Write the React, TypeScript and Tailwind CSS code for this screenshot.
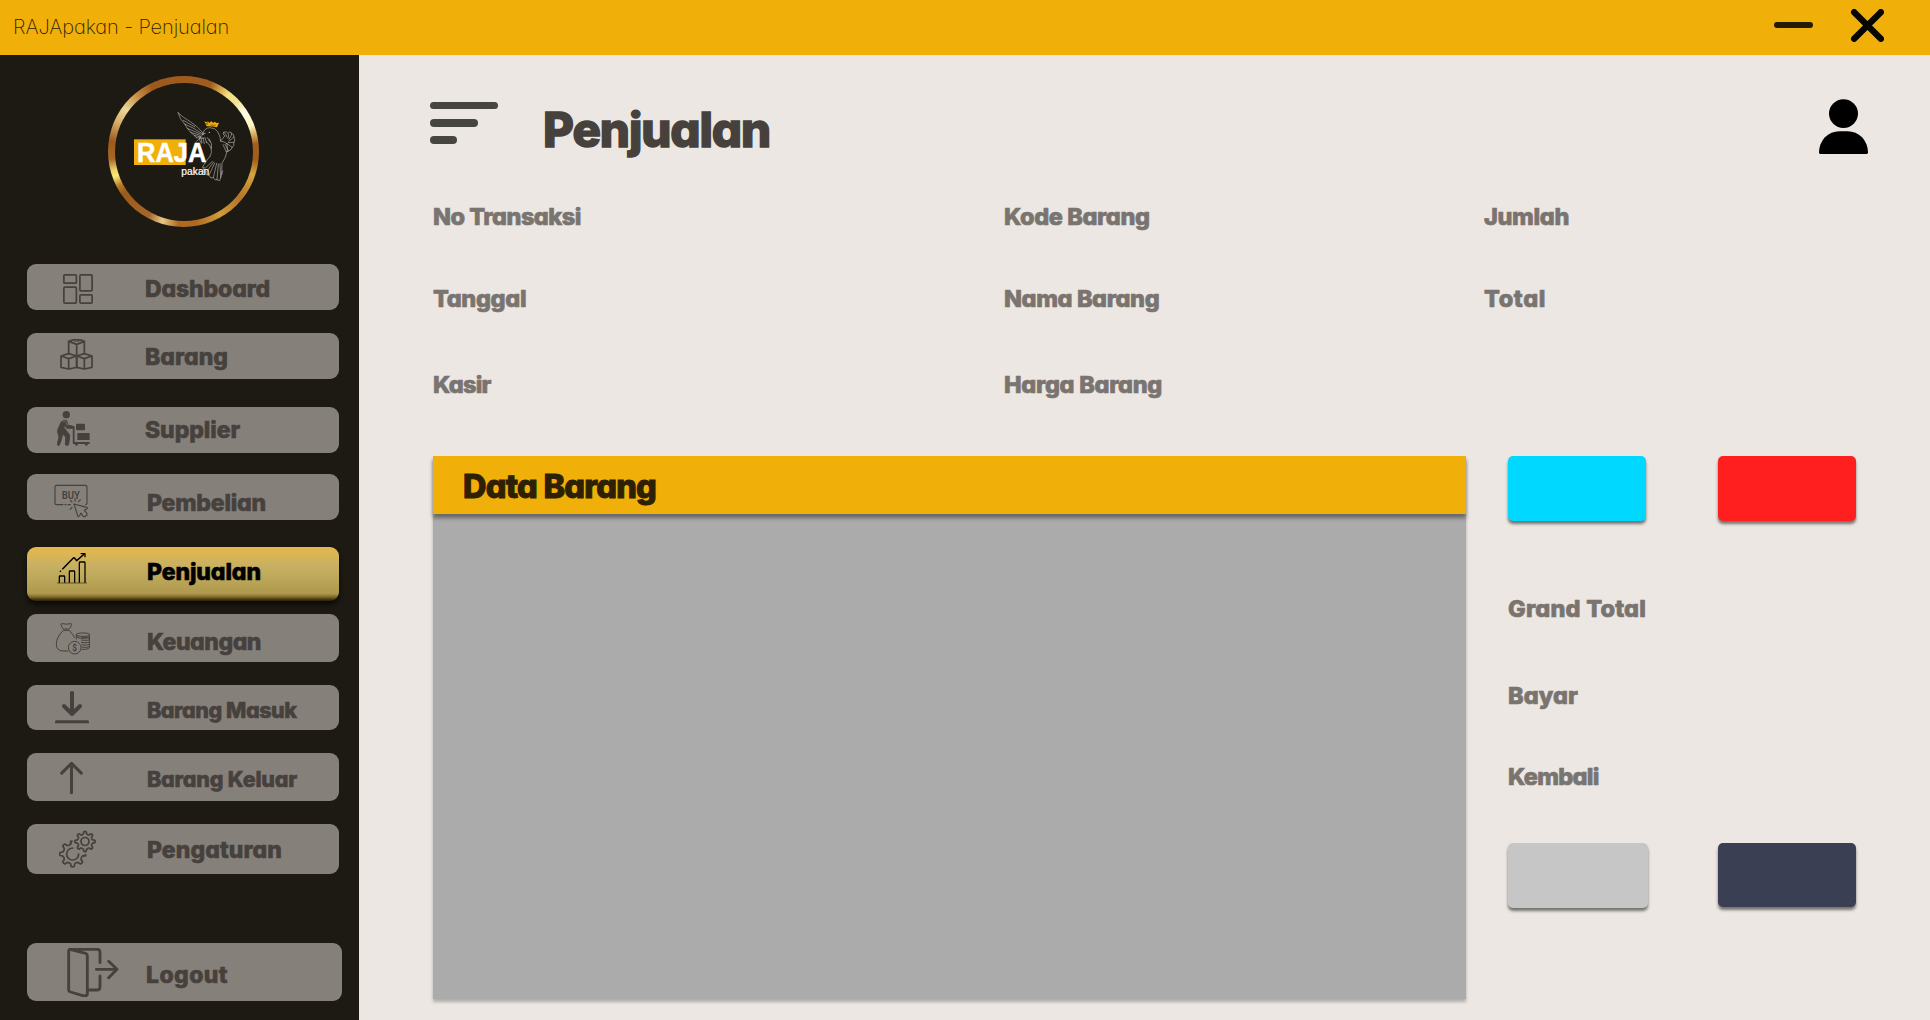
import React, { type ReactNode } from 'react';

const DARK = '#46413d';
const GREY = '#86807b';

/* ---------- icons ---------- */

function DashboardIcon() {
  return (
    <svg className="ml-[36px] mt-[10px] h-[30px] w-[30px]" viewBox="189 72 90 90" fill="none" stroke={DARK} strokeWidth="5.2">
      <rect x="191.600" y="74.600" width="37.500" height="25" rx="3" />
      <rect x="239.700" y="74.600" width="36.700" height="48" rx="3" />
      <rect x="191.600" y="111.500" width="37.500" height="47.800" rx="3" />
      <rect x="239.700" y="134.500" width="36.700" height="24.800" rx="3" />
    </svg>
  );
}

function BoxesIcon() {
  return (
    <svg className="ml-[33px] mt-[6px] h-[31px] w-[33px]" viewBox="180 267 99 93" fill="none" stroke={DARK} strokeWidth="5.2" strokeLinejoin="round">
      <path d="M206 312V274Q218 269 230 269Q242 269 253 274V312 M206 274L230 283L253 274 M230 283V316" />
      <path d="M183 318L206 311L230 318V352L206 357L183 352Z M183 318L206 326L230 318 M206 326V357" />
      <path d="M230 318L253 311L276 318V352L253 357L230 352Z M230 318L253 326L276 318 M253 326V357" />
      <path d="M223 275L230 273L237 275" strokeWidth="2.500" />
    </svg>
  );
}

function SupplierIcon() {
  return (
    <svg className="ml-[30px] mt-[4px] h-[35px] w-[34px]" viewBox="172 63 102 105" fill={DARK}>
      <circle cx="200" cy="74" r="11" />
      <path d="M185 95Q192 88 201 92L206 106L219 108V115H201L196 104L193 113L208 132Q211 136 210 142L207 164Q202 169 197 164L198 141L189 132L184 153L178 167Q173 167 173 161L178 141L174 127Q173 121 176 115Z" stroke={DARK} strokeWidth="2.500" strokeLinejoin="round" />
      <path d="M188 94Q196 91 200 98L204 107" fill="none" stroke={GREY} strokeWidth="2" />
      <path d="M217 111H222V159H270" fill="none" stroke={DARK} strokeWidth="5.500" strokeLinejoin="round" />
      <rect x="229" y="101" width="27" height="20" rx="3" />
      <rect x="233" y="129" width="37" height="21" rx="1" />
      <circle cx="230" cy="162" r="5" />
      <circle cx="260" cy="162" r="5" />
    </svg>
  );
}

function BuyIcon() {
  return (
    <svg className="ml-[27px] mt-[10px] h-[35px] w-[35px]" viewBox="163 283 105 105" fill="none" stroke={DARK} strokeWidth="3.4" strokeLinecap="round" strokeLinejoin="round">
      <path d="M190 345H171Q166 345 166 340V292Q166 287 171 287H257Q262 287 262 292V340Q262 344 258 345 M196 345H199 M205 345H212" />
      <text x="186" y="327" fontSize="34" fontFamily="Roboto, sans-serif" fontWeight="600" textLength="55" lengthAdjust="spacingAndGlyphs" fill={DARK} stroke="none">BUY</text>
      <path d="M226 326V335 M242 330L236 336 M212 332L217 337 M211 359L217 353" />
      <path d="M223 343L261 353Q265 355 261 358L254 362L262 372L262 376L255 381Q251 382 249 378L244 370L239 379Q236 383 234 378Z" />
    </svg>
  );
}

function SalesIcon() {
  return (
    <svg className="ml-[30px] mt-[6px] h-[31px] w-[30px]" viewBox="171 68 90 93" fill="none" stroke="#000" strokeWidth="3.8" strokeLinejoin="round">
      <path d="M178 157V139Q178 137 180 137H192Q194 137 194 139V157 M208 157V124Q208 122 210 122H222Q224 122 224 124V157 M238 157V97Q238 95 240 95H253Q255 95 255 97V157" />
      <path d="M171 158H261" strokeWidth="1.500" />
      <path d="M187 117L220 83Q222 81 224 84L230 91L253 71" strokeWidth="4.400" />
      <path d="M242 70H255V81" />
      <path d="M180 124L183 121" strokeWidth="4" />
    </svg>
  );
}

function MoneyIcon() {
  return (
    <svg className="ml-[28px] mt-[9px] h-[32px] w-[35px]" viewBox="165 278 105 96" fill="none" stroke={DARK} strokeWidth="3" strokeLinejoin="round">
      <path d="M188 295L183 283Q182 280 186 280Q200 283 212 280Q216 280 215 283L209 295 M189 296H208 M189 300H208" />
      <path d="M189 301Q169 321 169 342Q169 362 190 362H204 M208 301Q220 312 224 323" />
      <path d="M229 327V312 M269 312V352Q264 358 245 357 M245 321Q269 320 269 326 M243 329Q269 332 269 326 M243 336Q269 339 269 333 M245 343Q269 346 269 340 M245 350Q269 353 269 347" />
      <path d="M229 313Q229 308 249 308Q269 308 269 313Q269 318 249 318Q229 318 229 313ZM230 319Q233 324 249 324Q265 324 269 319" />
      <circle cx="224" cy="352" r="19" />
      <text x="224" y="361" fontSize="25" textAnchor="middle" fontFamily="Roboto, sans-serif" fontWeight="700" fill={DARK} stroke="none">$</text>
    </svg>
  );
}

function InIcon() {
  return (
    <svg className="ml-[28px] mt-[6px] h-[33px] w-[34px]" viewBox="165 62 102 99" fill="none" stroke={DARK} strokeLinejoin="round">
      <path d="M216 63V130" strokeWidth="12" />
      <path d="M192 107L216 131L240 107" strokeWidth="12" strokeLinecap="round" />
      <path d="M165 159V154Q165 150 170 150H262Q267 150 267 154V159Z" fill={DARK} stroke="none" />
    </svg>
  );
}

function OutIcon() {
  return (
    <svg className="ml-[33px] mt-[8px] h-[34px] w-[23px]" viewBox="180 272 69 102" fill="none" stroke={DARK} strokeWidth="9" strokeLinecap="round" strokeLinejoin="round">
      <path d="M214.500 367V279 M185 308.500L214.500 279L244 308.500" />
    </svg>
  );
}

function gearPath(cx: number, cy: number, outer: number, inner: number, turn: number) {
  const teeth = 8;
  const step = (Math.PI * 2) / teeth;
  const at = (r: number, a: number) => `${(cx + r * Math.cos(a)).toFixed(1)} ${(cy + r * Math.sin(a)).toFixed(1)}`;
  let d = '';
  for (let i = 0; i < teeth; i++) {
    const a = turn + i * step;
    d += `${i ? 'L' : 'M'}${at(inner, a - step * 0.27)}L${at(outer, a - step * 0.15)}Q${at(outer + 2, a)} ${at(outer, a + step * 0.15)}`;
    d += `L${at(inner, a + step * 0.27)}Q${at(inner - 3, a + step * 0.5)} ${at(inner, a + step * 0.73)}`;
  }
  return d + 'Z';
}

function GearsIcon() {
  return (
    <svg className="ml-[32px] mt-[6px] h-[38px] w-[37px]" viewBox="177 90 111 114" fill="none" stroke={DARK} strokeWidth="5.2" strokeLinejoin="round">
      <path d={gearPath(218, 162, 38, 30, Math.PI / 2)} />
      <path d="M218 144A18 18 0 1 0 236 162" strokeLinecap="round" />
      <circle cx="255" cy="125" r="37" fill={GREY} stroke="none" />
      <path d="M212 132V123" strokeLinecap="round" />
      <path d="M250 167H257" strokeLinecap="round" />
      <path d={gearPath(255, 124.5, 29.5, 23.5, Math.PI / 2)} />
      <circle cx="255" cy="124.500" r="12" />
    </svg>
  );
}

function LogoutIcon() {
  return (
    <svg className="ml-[40px] mt-[4px] h-[51px] w-[52px]" viewBox="200 441 156 153" fill="none" stroke={DARK} strokeWidth="8.6" strokeLinecap="round" strokeLinejoin="round">
      <path d="M209 448L256 460Q261 462 261 467V582Q261 588 254 587L247 587L211 576Q205 574 205 569V453Q205 448 210 448H291Q299 448 299 457V488 M299 528V560Q299 570 290 570H264" />
      <path d="M288 508H350 M325 484L350 508L325 533" />
    </svg>
  );
}

/* ---------- brand ---------- */

function Logo() {
  return (
    <div
      className="mt-[21px] ml-[108px] flex h-[151px] w-[151px] shrink-0 items-center justify-center rounded-full bg-[conic-gradient(#a05c1c_0deg,#a05c1c_22deg,#d9a850_31deg,#f3df80_38deg,#efe290_46deg,#fffbe4_57deg,#fdf6c4_69deg,#d9b060_76deg,#a35f1d_84deg,#a05c1c_96deg,#d6a53d_108deg,#b5752a_130deg,#cf9c3c_150deg,#b06a20_170deg,#b06a20_184deg,#e8c988_197deg,#a7652a_208deg,#9c591b_235deg,#b87a28_242deg,#f8e878_250deg,#f0d468_255deg,#a8682a_264deg,#9c591b_278deg,#d9ae6a_294deg,#ecd79a_306deg,#c89048_320deg,#9c591b_334deg,#a05c1c_360deg)]"
    >
      <div className="flex h-[138px] w-[138px] items-start rounded-full bg-[#1d1a13] pt-[28px] pl-[18px]">
        <svg className="h-[70px] w-[104px]" viewBox="99 120 312 210">
          <rect x="102" y="205" width="155" height="77" fill="#f1af09" />
          <g fill="none" stroke="#c9c7c4" strokeWidth="1.700" strokeLinecap="round" strokeLinejoin="round">
            <path d="M234 125Q249 140 268 150Q290 163 309 186" />
            <path d="M234 125Q240 146 254 159Q262 163 279 171L311 191" />
            <path d="M250 148L285 168 M254 159L262 172L303 190 M262 172L272 184L300 193 M272 184L283 193L302 198 M283 193L288 200L312 202" />
            <path d="M309 186Q313 171 330 170Q346 171 353 182Q361 194 362 210 M311 186Q306 196 290 211 M316 187L308 190" />
            <path d="M300 196Q295 208 304 217 M303 201L306 215 M309 200L313 218 M315 200L320 215 M322 200L330 213 M328 204Q338 220 334 232Q327 216 318 212" />
            <path d="M362 210Q369 203 374 195 M374 195Q366 188 371 184Q379 189 381 198 M371 184Q381 178 386 192L384 202 M386 184Q396 180 394 193L387 205 M394 186Q404 190 402 198L386 211 M402 198Q407 208 402 214L385 215 M402 214Q403 226 397 229L381 218 M397 229Q392 239 386 240L375 220 M386 240L379 243L369 221" />
            <path d="M333 230Q338 245 330 256 M381 218Q385 236 378 252Q376 262 366 276L365 310 M362 210Q378 214 381 218" />
            <path d="M330 256Q316 272 307 289L316 291L337 271 M311 292L309 302L318 304L341 273 M318 304L319 311L327 313L344 276 M327 313L333 321L340 320L350 277 M340 320L346 327L351 326L355 279 M351 326L359 329L362 320L360 278 M362 320L368 300" />
          </g>
          <circle cx="328" cy="184" r="2" fill="#ddd" />
          <path d="M313 151L320 154L323 151L329 156L334 150L339 156L344 152L349 156L357 155L351 169Q335 165 320 166Z" fill="#f1af09" />
          <path d="M316 158L325 160 M331 162L347 163 M322 152L322 157" stroke="#1d1a13" strokeWidth="1.500" />
          <text x="111" y="273" fontFamily="'Liberation Sans', Arial, sans-serif" fontWeight="700" fontSize="81" fill="#fff" stroke="#fff" strokeWidth="1.500" textLength="208" lengthAdjust="spacingAndGlyphs">RAJA</text>
          <text x="244" y="312" fontFamily="'Liberation Sans', Arial, sans-serif" fontSize="31" fill="#fff" stroke="#fff" strokeWidth=".6" textLength="84" lengthAdjust="spacingAndGlyphs">pakan</text>
        </svg>
      </div>
    </div>
  );
}

/* ---------- navigation ---------- */

type NavItem = { label: string; icon: ReactNode; box: string; text: string };

const NAV: NavItem[] = [
  { label: 'Dashboard', icon: <DashboardIcon />, box: 'mt-[37px] h-[46px] w-[312px]', text: 'mt-[13px] -ml-px text-[23px] tracking-[-0.14px]' },
  { label: 'Barang', icon: <BoxesIcon />, box: 'mt-[23px] h-[46px] w-[312px]', text: 'mt-[12px] -ml-px text-[23px]' },
  { label: 'Supplier', icon: <SupplierIcon />, box: 'mt-[28px] h-[46px] w-[312px]', text: 'mt-[11px] -ml-px text-[23px] tracking-[-0.08px]' },
  { label: 'Pembelian', icon: <BuyIcon />, box: 'mt-[21px] h-[46px] w-[312px]', text: 'mt-[17px] ml-px text-[23px] tracking-[-0.2px]' },
  { label: 'Penjualan', icon: <SalesIcon />, box: 'mt-[27px] h-[54px] w-[312px]', text: 'mt-[13px] ml-px text-[23px] tracking-[-0.09px]' },
  { label: 'Keuangan', icon: <MoneyIcon />, box: 'mt-[13px] h-[48px] w-[312px]', text: 'mt-[16px] ml-px text-[23px] tracking-[-0.47px]' },
  { label: 'Barang Masuk', icon: <InIcon />, box: 'mt-[23px] h-[45px] w-[312px]', text: 'mt-[13px] ml-px text-[21.5px] tracking-[-0.45px]' },
  { label: 'Barang Keluar', icon: <OutIcon />, box: 'mt-[23px] h-[48px] w-[312px]', text: 'mt-[14px] ml-px text-[21.5px] tracking-[-0.2px]' },
  { label: 'Pengaturan', icon: <GearsIcon />, box: 'mt-[23px] h-[50px] w-[312px]', text: 'mt-[14px] ml-px text-[23px] tracking-[0.07px]' },
  { label: 'Logout', icon: <LogoutIcon />, box: 'mt-[69px] h-[58px] w-[315px]', text: 'mt-[20px] text-[23px] tracking-[0.4px]' },
];

const ACTIVE = 'Penjualan';

function NavButton({ item }: { item: NavItem }) {
  const skin =
    item.label === ACTIVE
      ? 'bg-[linear-gradient(#e4b84e_0%,#dcb653_12%,#c8b062_35%,#bba658_60%,#ad984d_86%,#8c7636_91%,#4a3812_97%,#2e2006_100%)] text-black shadow-[0_4px_5px_rgba(0,0,0,0.6)]'
      : 'bg-[#86807b] text-[#46413d]';
  return (
    <button className={`ml-[27px] grid shrink-0 grid-cols-[119px_1fr] items-start rounded-[9px] text-left ${item.box} ${skin}`}>
      {item.icon}
      <span className={`whitespace-nowrap leading-6 font-extrabold [-webkit-text-stroke:0.6px] ${item.text}`}>{item.label}</span>
    </button>
  );
}

/* ---------- form ---------- */

function Label({ children, className }: { children: string; className: string }) {
  return (
    <span className={`block h-6 whitespace-nowrap text-[23.5px] leading-6 font-extrabold text-[#7a7470] [-webkit-text-stroke:0.7px] ${className}`}>
      {children}
    </span>
  );
}

const BUTTON_SHADOW = 'shadow-[0_3px_3px_rgba(0,0,0,0.5)]';

export default function App() {
  return (
    <div className="flex h-[1020px] w-[1930px] flex-col overflow-hidden bg-[#ece7e3] font-['Inter',sans-serif] [font-feature-settings:'cv11']">
      <header className="flex h-[55px] shrink-0 items-start bg-[#f1af09]">
        <h2 className="mt-[17px] ml-[13px] text-[20px] leading-5 font-extralight tracking-[-0.1px] text-[#2e2206]">RAJApakan - Penjualan</h2>
        <button aria-label="Minimize" className="mt-[22px] ml-auto h-[6px] w-[39px] rounded-full bg-[#241b02]" />
        <button aria-label="Close" className="mt-[9px] mr-[46px] ml-[38px]">
          <svg className="h-[33px] w-[33px]" viewBox="0 0 99 99" stroke="#080600" strokeWidth="19" strokeLinecap="round">
            <path d="M9.500 9.500L89.500 89.500M89.500 9.500L9.500 89.500" />
          </svg>
        </button>
      </header>

      <div className="flex min-h-0 flex-1">
        <nav className="flex w-[359px] shrink-0 flex-col bg-[#1d1a13]">
          <Logo />
          {NAV.map((item) => (
            <NavButton key={item.label} item={item} />
          ))}
        </nav>

        <main className="flex flex-1 flex-col pl-[71px]">
          <div className="flex h-[150px] shrink-0 items-start">
            <button aria-label="Menu" className="mt-[47px] flex w-[113px] flex-col gap-[9.8px]">
              <span className="h-[7.4px] w-[68px] rounded-full bg-[#464542]" />
              <span className="h-[7.4px] w-[48px] rounded-full bg-[#464542]" />
              <span className="h-[7.4px] w-[27px] rounded-full bg-[#464542]" />
            </button>
            <h1 className="mt-[51px] text-[47.5px] leading-[48px] font-extrabold tracking-[-1.1px] text-[#46413d] [-webkit-text-stroke:1.4px]">Penjualan</h1>
            <svg className="mt-[44px] mr-[62px] ml-auto h-[55px] w-[49px]" viewBox="1137 296 147 166" preserveAspectRatio="none">
              <circle cx="1210.500" cy="340" r="43.500" />
              <path d="M1141 462Q1137 462 1137 457A61 64 0 0 1 1198 393H1223A61 64 0 0 1 1284 457Q1284 462 1280 462Z" />
            </svg>
          </div>

          <div className="ml-[3px] grid h-[251px] shrink-0 grid-cols-[571px_480px_auto] grid-rows-[82px_86px_83px]">
            <Label className="tracking-[-0.5px]">No Transaksi</Label>
            <Label className="tracking-[-0.4px]">Kode Barang</Label>
            <Label className="tracking-[-0.35px]">Jumlah</Label>
            <Label className="tracking-[-0.35px]">Tanggal</Label>
            <Label className="tracking-[-0.4px]">Nama Barang</Label>
            <Label className="tracking-[0.6px]">Total</Label>
            <Label className="tracking-[-0.75px]">Kasir</Label>
            <Label className="tracking-[-0.3px]">Harga Barang</Label>
          </div>

          <div className="ml-[3px] flex items-start">
            <section className="flex h-[543px] w-[1033px] flex-col bg-[#ababab] shadow-[0_3px_3px_rgba(0,0,0,0.25)]">
              <div className="h-[58px] bg-[#f1af09] pt-[14px] pl-[30px] shadow-[0_4px_4px_rgba(0,0,0,0.4)]">
                <h3 className="text-[32.5px] leading-[33px] font-extrabold tracking-[-0.75px] text-[#2e2103] [-webkit-text-stroke:1px]">Data Barang</h3>
              </div>
            </section>

            <aside className="ml-[42px] flex flex-col">
              <div className="flex gap-[72px]">
                <button aria-label="Tambah" className={`h-[65px] w-[138px] rounded-[5px] bg-[#00d8ff] ${BUTTON_SHADOW}`} />
                <button aria-label="Hapus" className={`h-[65px] w-[138px] rounded-[5px] bg-[#ff1f1f] ${BUTTON_SHADOW}`} />
              </div>
              <div className="mt-[76px] flex h-[246px] flex-col">
                <Label className="mb-[63px] tracking-[0.2px]">Grand Total</Label>
                <Label className="mb-[57px] tracking-[0.05px]">Bayar</Label>
                <Label className="tracking-[-0.7px]">Kembali</Label>
              </div>
              <div className="flex gap-[70px]">
                <button aria-label="Simpan" className={`h-[65px] w-[140px] rounded-[5px] bg-[#c6c6c6] ${BUTTON_SHADOW}`} />
                <button aria-label="Cetak" className={`h-[64px] w-[138px] rounded-[5px] bg-[#3b3f54] ${BUTTON_SHADOW}`} />
              </div>
            </aside>
          </div>
        </main>
      </div>
    </div>
  );
}
